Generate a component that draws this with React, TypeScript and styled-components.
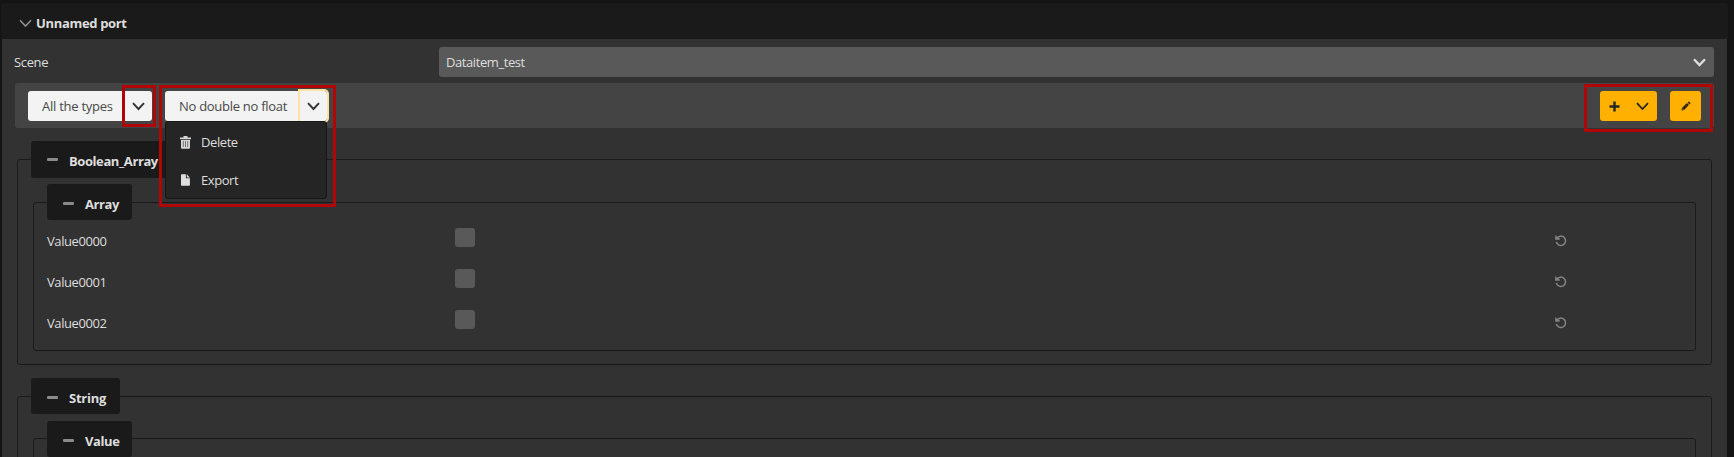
import React from 'react';
import styled, { createGlobalStyle } from 'styled-components';

const GlobalStyle = createGlobalStyle`
  * { box-sizing: border-box; }
  html, body { margin: 0; height: 100%; overflow: hidden; background: #141414; }
  body {
    font-family: 'Open Sans', 'Noto Sans', sans-serif;
    font-size: 13px;
    line-height: 18px;
    color: #dedede;
  }
`;

const Page = styled.div`
  height: 457px;
  overflow: hidden;
  padding: 3px 6px 0 1px;
`;

const PanelHeader = styled.header`
  display: flex;
  align-items: center;
  gap: 4px;
  height: 36px;
  padding: 4px 0 0 18px;
  border-radius: 3px 3px 0 0;
  background: #1a1a1a;
`;

const Label = styled.span<{ $spacing?: number; $bold?: boolean }>`
  white-space: nowrap;
  letter-spacing: ${(p) => p.$spacing ?? -0.42}px;
  font-weight: ${(p) => (p.$bold ? 700 : 400)};
`;

const PanelBody = styled.main`
  height: 430px;
  margin: 0 1px 0 1px;
  padding: 8px 13px 0;
  background: #323232;
`;

const SceneRow = styled.div`
  display: grid;
  grid-template-columns: 424px 1fr;
  align-items: center;
  height: 30px;
  margin-left: -1px;
`;

const SelectBox = styled.div`
  display: flex;
  align-items: center;
  justify-content: space-between;
  height: 30px;
  margin-left: 1px;
  padding: 0 8px 0 7px;
  border-radius: 3px;
  background: #595959;
`;

const Toolbar = styled.div`
  display: flex;
  gap: 13px;
  height: 45px;
  margin-top: 6px;
  padding: 8px 13px 0 13px;
  border-radius: 3px;
  background: #444;
`;

const SplitButton = styled.div<{ $width: number }>`
  position: relative;
  display: flex;
  width: ${(p) => p.$width}px;
  height: 30px;
  border-radius: 3px;
  background: #f3f3f3;
  color: #484848;
`;

const MainAction = styled.div`
  flex: 1;
  display: flex;
  align-items: center;
  padding-left: 14px;
`;

const ToggleAction = styled.div<{ $focused?: boolean }>`
  display: flex;
  align-items: center;
  justify-content: center;
  width: ${(p) => (p.$focused ? 27 : 28)}px;
  border-radius: 0 3px 3px 0;
  box-shadow: ${(p) => (p.$focused ? '0 0 0 2px #ffe2a3' : 'none')};
`;

const Spacer = styled.div`
  flex: 1;
`;

const AccentButton = styled.div<{ $width: number }>`
  display: flex;
  align-items: center;
  justify-content: center;
  gap: 16px;
  width: ${(p) => p.$width}px;
  height: 30px;
  border-radius: 3px;
  background: #ffb000;
`;

const Menu = styled.div`
  position: absolute;
  z-index: 2;
  top: 30px;
  left: 0;
  width: 162px;
  height: 78px;
  padding-top: 1px;
  border: 1px solid #161616;
  border-radius: 3px;
  background: #252525;
  color: #dedede;
`;

const MenuItem = styled.div`
  display: flex;
  align-items: center;
  gap: 10px;
  height: 38px;
  padding-left: 14px;
`;

const Outline = styled.div<{ $x: number; $y: number; $w: number; $h: number }>`
  position: absolute;
  z-index: 3;
  left: ${(p) => p.$x}px;
  top: ${(p) => p.$y}px;
  width: ${(p) => p.$w}px;
  height: ${(p) => p.$h}px;
  border: 3px solid #b00606;
  pointer-events: none;
`;

const Groups = styled.div`
  padding: 31px 2px 0;
`;

const Group = styled.section<{ $height: number; $gap?: number }>`
  height: ${(p) => p.$height}px;
  margin-bottom: ${(p) => p.$gap ?? 0}px;
  padding: 0 15px 0 15px;
  border: 1px solid #1a1a1a;
  border-radius: 3px;
`;

const Legend = styled.div<{ $width: number; $tall?: boolean; $inner?: boolean; $shift?: number }>`
  display: flex;
  align-items: center;
  gap: 11px;
  width: ${(p) => p.$width}px;
  height: ${(p) => (p.$tall ? 37 : 36)}px;
  margin: ${(p) => -19 + (p.$shift ?? 0)}px 0 ${(p) => (p.$inner ? 0 : 24)}px -2px;
  padding: ${(p) => (p.$tall ? 2 : 4)}px 0 0 16px;
  border-radius: 3px;
  background: #1a1a1a;
`;

const Dash = styled.i`
  width: 11px;
  height: 3px;
  margin-top: -2px;
  border-radius: 1px;
  background: #8a8a8a;
`;

const ValueRow = styled.div`
  display: grid;
  grid-template-columns: 408px 1100px 12px;
  align-items: center;
  height: 41px;
  margin-left: -2px;

  svg {
    margin-top: 1px;
  }
`;

const Check = styled.i`
  width: 20px;
  height: 19px;
  margin-top: -6px;
  border-radius: 3px;
  background: #595959;
`;

const Chevron = ({ color, width = 1.9 }: { color: string; width?: number }) => (
  <svg width="13" height="9" viewBox="0 0 13 9">
    <path d="M1 1.2 6.5 7 12 1.2" fill="none" stroke={color} strokeWidth={width} />
  </svg>
);

const UndoIcon = () => (
  <svg width="12" height="12" viewBox="0 0 12 12">
    <path d="M1.8 3.4A4.7 4.7 0 1 1 1.3 7" fill="none" stroke="#858585" strokeWidth="1.5" />
    <path d="M.2.4v4.3h4.5V3.2L2.4 3 1.2.4Z" fill="#858585" />
  </svg>
);

const TrashIcon = () => (
  <svg width="11" height="13" viewBox="0 0 11 13">
    <path d="M3.5 0h4v1.5H11v1.8H0V1.5h3.5Z M1 4h9v7.8a1 1 0 0 1-1 1H2a1 1 0 0 1-1-1Z" fill="#d6d6d6" />
    <path d="M3.3 5v6M5.5 5v6M7.7 5v6" stroke="#4a4a4a" strokeWidth=".7" />
  </svg>
);

const FileIcon = () => (
  <svg width="11" height="12" viewBox="0 0 11 12">
    <path d="M1.8.3h4.1v3.9h4V11a.8.8 0 0 1-.8.8H1.8A.8.8 0 0 1 1 11V1.1a.8.8 0 0 1 .8-.8ZM6.8.3l3.1 3.1H6.8Z" fill="#dedede" />
  </svg>
);

const PlusIcon = () => (
  <svg width="11" height="11" viewBox="0 0 11 11">
    <path d="M5.5.5v10M.5 5.5h10" stroke="#252525" strokeWidth="2.4" />
  </svg>
);

const PencilIcon = () => (
  <svg width="10" height="10" viewBox="0 0 11 11">
    <path d="M.5 10.5 1 7.6 6.5 2.3 8.7 4.5 3.4 10ZM7.2 1.6 8 .8Q8.5.4 9 .8L10.2 2q.4.5 0 1L9.4 3.8Z" fill="#30291a" />
    <path d="M1.4 8.2 2.9 9.7" stroke="#ffb000" strokeWidth=".7" />
  </svg>
);

const values = ['Value0000', 'Value0001', 'Value0002'];

export default function App() {
  return (
    <>
      <GlobalStyle />
      <Page>
        <PanelHeader>
          <Chevron color="#8f8f8f" width={1.6} />
          <Label $bold $spacing={-0.33}>Unnamed port</Label>
        </PanelHeader>
        <PanelBody>
          <SceneRow>
            <Label $spacing={-0.35}>Scene</Label>
            <SelectBox>
              <Label>Dataitem_test</Label>
              <Chevron color="#dedede" width={2.3} />
            </SelectBox>
          </SceneRow>
          <Toolbar>
            <SplitButton $width={124}>
              <MainAction>
                <Label $spacing={-0.25}>All the types</Label>
              </MainAction>
              <ToggleAction>
                <Chevron color="#333" />
              </ToggleAction>
              <Outline $x={94} $y={-6} $w={34} $h={42} />
            </SplitButton>
            <SplitButton $width={162}>
              <MainAction>
                <Label $spacing={-0.28}>No double no float</Label>
              </MainAction>
              <ToggleAction $focused>
                <Chevron color="#333" />
              </ToggleAction>
              <Menu>
                <MenuItem>
                  <TrashIcon />
                  <Label>Delete</Label>
                </MenuItem>
                <MenuItem>
                  <FileIcon />
                  <Label>Export</Label>
                </MenuItem>
              </Menu>
              <Outline $x={-6} $y={-6} $w={177} $h={122} />
            </SplitButton>
            <Spacer />
            <AccentButton $width={57}>
              <PlusIcon />
              <Chevron color="#252525" width={1.8} />
            </AccentButton>
            <AccentButton $width={31}>
              <PencilIcon />
            </AccentButton>
            <Outline $x={1584} $y={84} $w={129} $h={48} />
          </Toolbar>
          <Groups>
            <Group $height={206} $gap={31}>
              <Legend $width={146} $tall>
                <Dash />
                <Label $bold>Boolean_Array</Label>
              </Legend>
              <Group $height={149}>
                <Legend $width={85} $inner>
                  <Dash />
                  <Label $bold>Array</Label>
                </Legend>
                {values.map((value) => (
                  <ValueRow key={value}>
                    <Label>{value}</Label>
                    <Check />
                    <UndoIcon />
                  </ValueRow>
                ))}
              </Group>
            </Group>
            <Group $height={206}>
              <Legend $width={89}>
                <Dash />
                <Label $bold $spacing={-0.25}>String</Label>
              </Legend>
              <Group $height={149}>
                <Legend $width={85} $inner $shift={1}>
                  <Dash />
                  <Label $bold>Value</Label>
                </Legend>
              </Group>
            </Group>
          </Groups>
        </PanelBody>
      </Page>
    </>
  );
}
